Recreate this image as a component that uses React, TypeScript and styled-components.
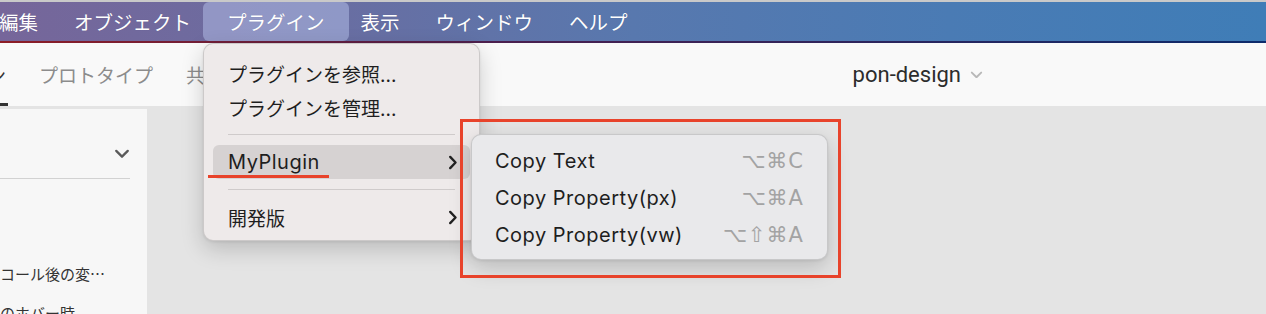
import styled, { createGlobalStyle } from 'styled-components';

const GlobalStyle = createGlobalStyle`
  html, body {
    margin: 0;
    padding: 0;
    width: 1266px;
    height: 314px;
    overflow: hidden;
    background: #e4e4e4;
  }
  body {
    font-family: 'Inter', 'Noto Sans CJK JP', sans-serif;
    -webkit-font-smoothing: antialiased;
  }
`;

const Page = styled.div`
  position: relative;
  width: 1266px;
  height: 314px;
  display: flex;
  flex-direction: column;
  overflow: hidden;
`;

const MenuBar = styled.div`
  position: relative;
  flex: none;
  height: 39px;
  border-top: 2px solid #c9c9c9;
  background: linear-gradient(90deg, #76669a 0%, #6a6da1 25%, #5878ae 50%, #4a7bb4 75%, #3f7db7 100%);
  display: flex;
  align-items: stretch;
  margin-bottom: 2px;
  &::after {
    content: '';
    position: absolute;
    left: 0;
    right: 0;
    bottom: -2px;
    height: 2px;
    background: linear-gradient(90deg, #8d1d26 0%, #4a1f4f 40%, #0d2b6b 100%);
  }
`;

const MenuRow = styled.div`
  display: flex;
  align-items: stretch;
  margin-left: -19px;
`;

const MenuItem = styled.div<{ $active?: boolean }>`
  display: flex;
  align-items: center;
  padding: 0 ${(p) => (p.$active ? '24px' : '18px')};
  margin: 0 ${(p) => (p.$active ? '-6px' : '0')};
  font-family: 'Noto Sans CJK JP', sans-serif;
  font-size: 19.5px;
  color: #fff;
  text-shadow: 0 0 1px rgba(0, 0, 0, 0.15);
  border-radius: 6px;
  background: ${(p) => (p.$active ? 'rgba(190, 205, 245, 0.45)' : 'transparent')};
  white-space: nowrap;
`;

const Toolbar = styled.div`
  flex: none;
  height: 63px;
  background: #f9f9f9;
  display: flex;
  align-items: stretch;
`;

const Tabs = styled.div`
  display: flex;
  align-items: stretch;
  gap: 33px;
  margin-left: -70px;
`;

const Tab = styled.div<{ $active?: boolean }>`
  position: relative;
  display: flex;
  align-items: center;
  font-family: 'Noto Sans CJK JP', sans-serif;
  font-size: 19px;
  color: ${(p) => (p.$active ? '#333' : '#8c8c8c')};
  white-space: nowrap;
  &::after {
    content: '';
    display: ${(p) => (p.$active ? 'block' : 'none')};
    position: absolute;
    left: 0;
    right: -2px;
    bottom: 0;
    height: 3px;
    background: #333;
  }
`;

const ProjectTitle = styled.div`
  margin-left: auto;
  margin-right: 283px;
  display: flex;
  align-items: center;
  gap: 9px;
  font-family: 'Roboto', 'Liberation Sans', sans-serif;
  font-size: 22px;
  color: #2c2c2c;
`;

const Workspace = styled.div`
  flex: 1;
  min-height: 0;
  overflow: hidden;
  display: flex;
  padding-top: 3px;
  background: #e4e4e4;
`;

const LeftPanel = styled.div`
  width: 147px;
  flex: none;
  background: #f7f7f7;
  display: flex;
  flex-direction: column;
`;

const PanelHeader = styled.div`
  flex: none;
  width: 130px;
  height: 70px;
  display: flex;
  align-items: flex-start;
  justify-content: flex-end;
  padding: 40px 0 0;
  border-bottom: 1px solid #d2d2d2;
  box-sizing: border-box;
`;

const LayerList = styled.div`
  flex: none;
  display: flex;
  flex-direction: column;
  gap: 21px;
  padding-top: 86px;
`;

const LayerName = styled.div`
  font-family: 'Noto Sans CJK JP', sans-serif;
  font-size: 15px;
  color: #333;
  line-height: 18px;
  white-space: nowrap;
`;

const Canvas = styled.div`
  flex: 1;
`;

const Dropdown = styled.div`
  position: absolute;
  left: 203px;
  top: 43px;
  width: 277px;
  height: 198px;
  box-sizing: border-box;
  padding: 12px 9px 8px;
  background: #eeeaea;
  border: 1px solid rgba(0, 0, 0, 0.14);
  border-radius: 10px;
  box-shadow: 0 8px 22px rgba(0, 0, 0, 0.18), 0 1px 3px rgba(0, 0, 0, 0.08);
  display: flex;
  flex-direction: column;
`;

const DropItem = styled.div<{ $highlight?: boolean; $latin?: boolean }>`
  height: 34px;
  flex: none;
  display: flex;
  align-items: center;
  justify-content: space-between;
  padding: 0 12px 0 15px;
  border-radius: 6px;
  background: ${(p) => (p.$highlight ? '#d6d2d2' : 'transparent')};
  font-size: ${(p) => (p.$latin ? '20px' : '19px')};
  letter-spacing: ${(p) => (p.$latin ? '0.5px' : '0')};
  color: #1e1e1e;
  white-space: nowrap;
`;

const Separator = styled.div`
  height: 21px;
  flex: none;
  display: flex;
  align-items: center;
  padding: 0 15px;
  &::before {
    content: '';
    flex: 1;
    height: 1px;
    background: #cfcbcb;
  }
`;

const Submenu = styled.div`
  position: absolute;
  left: 471px;
  top: 134px;
  width: 357px;
  height: 126px;
  box-sizing: border-box;
  padding: 8px 0 6px;
  background: #e9e9eb;
  border: 1px solid rgba(0, 0, 0, 0.14);
  border-radius: 10px;
  box-shadow: 0 8px 22px rgba(0, 0, 0, 0.18), 0 1px 3px rgba(0, 0, 0, 0.08);
  display: flex;
  flex-direction: column;
`;

const SubItem = styled.div`
  height: 37px;
  display: flex;
  align-items: center;
  justify-content: space-between;
  padding: 0 23px 0 23px;
  font-size: 20px;
  letter-spacing: 0.5px;
  color: #1e1e1e;
  white-space: nowrap;
`;

const Shortcut = styled.span`
  font-family: 'DejaVu Sans', sans-serif;
  font-size: 21px;
  color: #a3a3a3;
  letter-spacing: 1px;
`;

const Highlight = styled.div`
  position: absolute;
  left: 460px;
  top: 119px;
  width: 381px;
  height: 159px;
  box-sizing: border-box;
  border: 3px solid #e8432b;
  pointer-events: none;
`;

const Underline = styled.div`
  position: absolute;
  left: 208px;
  top: 175px;
  width: 121px;
  height: 3px;
  background: #e8432b;
`;

const Chevron = ({ dir, color, size }: { dir: 'right' | 'down'; color: string; size: number }) =>
  dir === 'right' ? (
    <svg width={size * 0.65} height={size} viewBox="0 0 9 14">
      <path d="M2 1.8 L7 7 L2 12.2" fill="none" stroke={color} strokeWidth="2.2" strokeLinecap="round" strokeLinejoin="round" />
    </svg>
  ) : (
    <svg width={size} height={size * 0.6} viewBox="0 0 16 10">
      <path d="M2 2 L8 8 L14 2" fill="none" stroke={color} strokeWidth="2.4" strokeLinecap="round" strokeLinejoin="round" />
    </svg>
  );

const menus = ['編集', 'オブジェクト', 'プラグイン', '表示', 'ウィンドウ', 'ヘルプ'];

const subItems = [
  { label: 'Copy Text', keys: '⌥⌘C' },
  { label: 'Copy Property(px)', keys: '⌥⌘A' },
  { label: 'Copy Property(vw)', keys: '⌥⇧⌘A' },
];

export default function App() {
  return (
    <Page>
      <GlobalStyle />
      <MenuBar>
        <MenuRow>
          {menus.map((m) => (
            <MenuItem key={m} $active={m === 'プラグイン'}>
              {m}
            </MenuItem>
          ))}
        </MenuRow>
      </MenuBar>
      <Toolbar>
        <Tabs>
          <Tab $active>デザイン</Tab>
          <Tab>プロトタイプ</Tab>
          <Tab>共有</Tab>
        </Tabs>
        <ProjectTitle>
          pon-design
          <Chevron dir="down" color="#b8b8b8" size={13} />
        </ProjectTitle>
      </Toolbar>
      <Workspace>
        <LeftPanel>
          <PanelHeader>
            <Chevron dir="down" color="#5a5a5a" size={16} />
          </PanelHeader>
          <LayerList>
            <LayerName>コール後の変…</LayerName>
            <LayerName>のホバー時</LayerName>
          </LayerList>
        </LeftPanel>
        <Canvas />
      </Workspace>

      <Dropdown>
        <DropItem>プラグインを参照...</DropItem>
        <DropItem>プラグインを管理...</DropItem>
        <Separator />
        <DropItem $highlight $latin>
          MyPlugin
          <Chevron dir="right" color="#222" size={15} />
        </DropItem>
        <Separator />
        <DropItem>
          開発版
          <Chevron dir="right" color="#222" size={15} />
        </DropItem>
      </Dropdown>

      <Underline />

      <Submenu>
        {subItems.map((s) => (
          <SubItem key={s.label}>
            {s.label}
            <Shortcut>{s.keys}</Shortcut>
          </SubItem>
        ))}
      </Submenu>

      <Highlight />
    </Page>
  );
}
